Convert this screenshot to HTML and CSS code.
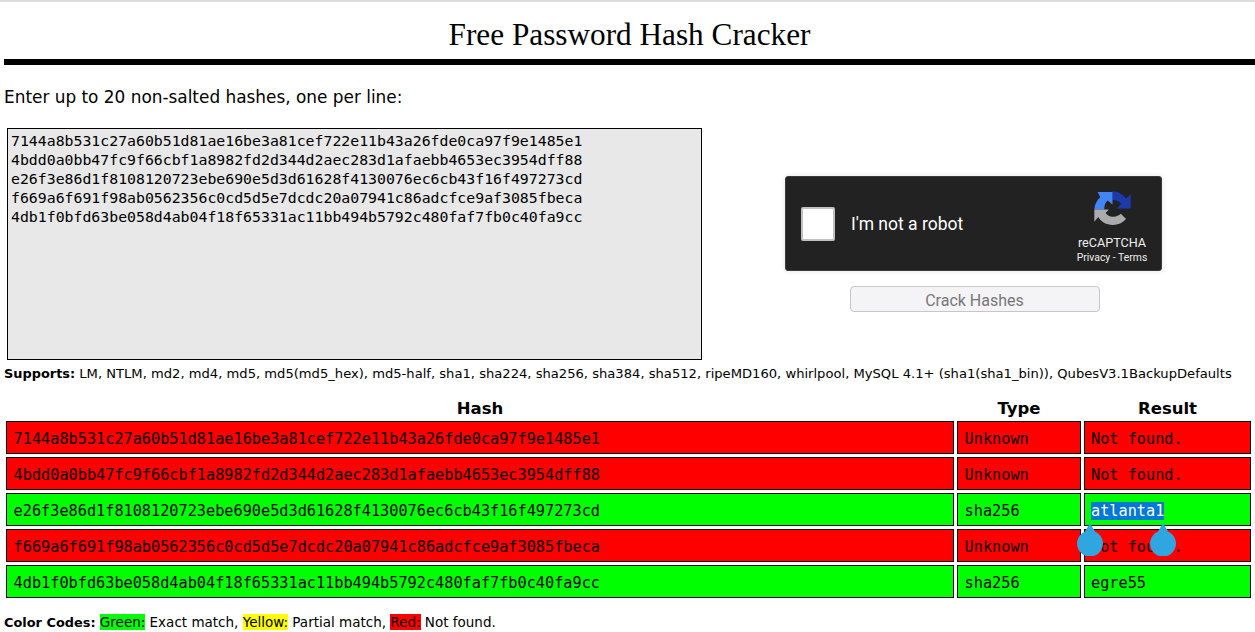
FILE: index.html
```html
<!doctype html>
<html>
  <head>
    <meta name="viewport" content="width=device-width, initial-scale=1">
    <link rel="stylesheet" href="styles.css">
    <title>Free Password Hash Cracker</title>
  </head>
  <body>
    <h1 class="title">Free Password Hash Cracker</h1>
    <p class="intro">Enter up to 20 non-salted hashes, one per line:</p>

    <div class="form">
      <textarea class="hashes" readonly spellcheck="false">7144a8b531c27a60b51d81ae16be3a81cef722e11b43a26fde0ca97f9e1485e1
4bdd0a0bb47fc9f66cbf1a8982fd2d344d2aec283d1afaebb4653ec3954dff88
e26f3e86d1f8108120723ebe690e5d3d61628f4130076ec6cb43f16f497273cd
f669a6f691f98ab0562356c0cd5d5e7dcdc20a07941c86adcfce9af3085fbeca
4db1f0bfd63be058d4ab04f18f65331ac11bb494b5792c480faf7fb0c40fa9cc</textarea>
      <div class="side">
        <div class="captcha">
          <span class="checkbox"></span>
          <span class="robot">I'm not a robot</span>
          <div class="brand">
            <svg class="logo" width="39" height="37" viewBox="36 24 118 110">
              <path d="M95 30C112 30 128 40 136 52L150 40V82H108L122 68C116 60 106 56 95 56Z" fill="#1c3aa9"/>
              <path d="M40 85C41 70 47 58 58 48L50 32H95V70L80 58C73 64 70 74 70 85Z" fill="#4285f4"/>
              <path d="M40 85H84L74 96C80 104 88 108 98 107C108 107 114 103 120 98L136 114C126 126 112 132 96 132C76 132 60 122 52 108L40 122Z" fill="#ababab"/>
            </svg>
            <div class="brand-name">reCAPTCHA</div>
            <div class="brand-links">Privacy - Terms</div>
          </div>
        </div>
        <button class="crack" disabled>Crack Hashes</button>
      </div>
    </div>

    <p class="supports"><b>Supports:</b> LM, NTLM, md2, md4, md5, md5(md5_hex), md5-half, sha1, sha224, sha256, sha384, sha512, ripeMD160, whirlpool, MySQL 4.1+ (sha1(sha1_bin)), QubesV3.1BackupDefaults</p>

    <table class="results">
      <tr><th class="col-hash">Hash</th><th class="col-type">Type</th><th class="col-result">Result</th></tr>
      <tr class="miss"><td>7144a8b531c27a60b51d81ae16be3a81cef722e11b43a26fde0ca97f9e1485e1</td><td>Unknown</td><td>Not found.</td></tr>
      <tr class="miss"><td>4bdd0a0bb47fc9f66cbf1a8982fd2d344d2aec283d1afaebb4653ec3954dff88</td><td>Unknown</td><td>Not found.</td></tr>
      <tr class="hit"><td>e26f3e86d1f8108120723ebe690e5d3d61628f4130076ec6cb43f16f497273cd</td><td>sha256</td>
        <td class="picked"><span class="selected">atlanta1</span>
          <svg class="handle handle-start" width="26" height="33" viewBox="0 0 26 33"><path d="M13 0l5 8.500a13 13 0 1 1-10 0z"/></svg>
          <svg class="handle handle-end" width="26" height="33" viewBox="0 0 26 33"><path d="M13 0l5 8.500a13 13 0 1 1-10 0z"/></svg>
        </td></tr>
      <tr class="miss"><td>f669a6f691f98ab0562356c0cd5d5e7dcdc20a07941c86adcfce9af3085fbeca</td><td>Unknown</td><td>Not found.</td></tr>
      <tr class="hit"><td>4db1f0bfd63be058d4ab04f18f65331ac11bb494b5792c480faf7fb0c40fa9cc</td><td>sha256</td><td>egre55</td></tr>
    </table>

    <p class="legend"><b>Color Codes:</b> <span class="green">Green:</span> Exact match, <span class="yellow">Yellow:</span> Partial match, <span class="red">Red:</span> Not found.</p>
  </body>
</html>
```

FILE: styles.css
```css
html, body {
  height: 632px;
  overflow: hidden;
}

body {
  margin: 0;
  padding: 0 0 0 4px;
  border-top: 2px solid #ddd;
  background: #fff;
  color: #000;
  font-family: "DejaVu Sans", Verdana, sans-serif;
  font-size: 13px;
}

.title {
  margin: 0;
  height: 63px;
  padding-top: 15px;
  box-sizing: border-box;
  border-bottom: 6px solid #000;
  text-align: center;
  font-family: "Liberation Serif", serif;
  font-size: 31.25px;
  font-weight: normal;
  line-height: 36px;
}

.intro {
  margin: 22px 0 0;
  font-size: 16.9px;
  line-height: 20px;
}

.form {
  display: flex;
  margin: 21px 0 0 3px;
}

.hashes {
  display: block;
  width: 695px;
  height: 232px;
  box-sizing: border-box;
  margin: 0;
  padding: 2px 3px;
  border: 1px solid #000;
  border-radius: 0;
  outline: none;
  resize: none;
  overflow: hidden;
  background: #e8e8e8;
  color: #000;
  font-family: "DejaVu Sans Mono", monospace;
  font-size: 14.83px;
  line-height: 19px;
  white-space: pre;
}

.side {
  margin: 48px 0 0 83px;
  width: 377px;
  display: flex;
  flex-direction: column;
  align-items: center;
}

.captcha {
  display: flex;
  align-items: center;
  width: 377px;
  height: 95px;
  box-sizing: border-box;
  padding: 0 13px 0 15px;
  border: 1px solid #3a3a3a;
  border-radius: 3px;
  background: #222;
  box-shadow: 0 0 4px 1px rgba(0, 0, 0, 0.08);
  color: #fff;
  font-family: Roboto, "Liberation Sans", sans-serif;
}

.checkbox {
  width: 30px;
  height: 30px;
  border: 2px solid #c1c1c1;
  border-radius: 2px;
  background: #fff;
  flex: none;
}

.robot {
  margin-left: 16px;
  font-size: 17.5px;
  flex: 1;
}

.brand {
  width: 72px;
  margin-top: 5px;
  text-align: center;
  color: #eee;
}

.logo {
  display: block;
  margin: 0 auto 10px;
}

.brand-name {
  font-size: 12.6px;
  line-height: 14px;
}

.brand-links {
  margin-top: 2px;
  margin-left: -2px;
  margin-right: -2px;
  font-size: 10.4px;
  line-height: 12px;
  white-space: nowrap;
}

.crack {
  width: 250px;
  height: 26px;
  margin: 15px 0 0 2px;
  padding: 2px 0 0;
  border: 1px solid #c5c5ca;
  border-radius: 4px;
  background: #f4f4f6;
  color: #777;
  font-family: Roboto, "Liberation Sans", sans-serif;
  font-size: 16px;
}

.supports {
  margin: 6px 0 0;
  font-size: 13.12px;
  line-height: 16px;
  white-space: nowrap;
}

.supports b, .legend b {
  font-size: 12.9px;
}

.results {
  margin: 12px 0 0 -1px;
  border-collapse: separate;
  border-spacing: 3px;
  table-layout: fixed;
  width: 1251px;
}

.results th {
  height: 21px;
  padding: 0;
  font-size: 16.5px;
  line-height: 18px;
  vertical-align: bottom;
}

.col-hash { width: 948px; }
.col-type { width: 124px; }

.results td {
  height: 28px;
  padding: 3px 0 0 6.6px;
  border: 1px solid #000;
  font-family: "DejaVu Sans Mono", monospace;
  font-size: 15.22px;
  line-height: 19px;
  white-space: nowrap;
  box-sizing: content-box;
}

.results td:last-child {
  padding-left: 6px;
}

.miss td { background: #f00; }
.hit td { background: #0f0; }

.picked { position: relative; }

.selected {
  background: #0078d7;
  color: #fff;
}

.handle {
  position: absolute;
  top: 29px;
  fill: #2fa6e0;
}

.handle-start { left: -8px; }
.handle-end { left: 65px; }

.legend {
  margin: 13px 0 0;
  font-size: 13.5px;
  line-height: 16px;
}

.legend .green { background: #0f0; }
.legend .yellow { background: #ff0; }
.legend .red { background: #f00; }
```
